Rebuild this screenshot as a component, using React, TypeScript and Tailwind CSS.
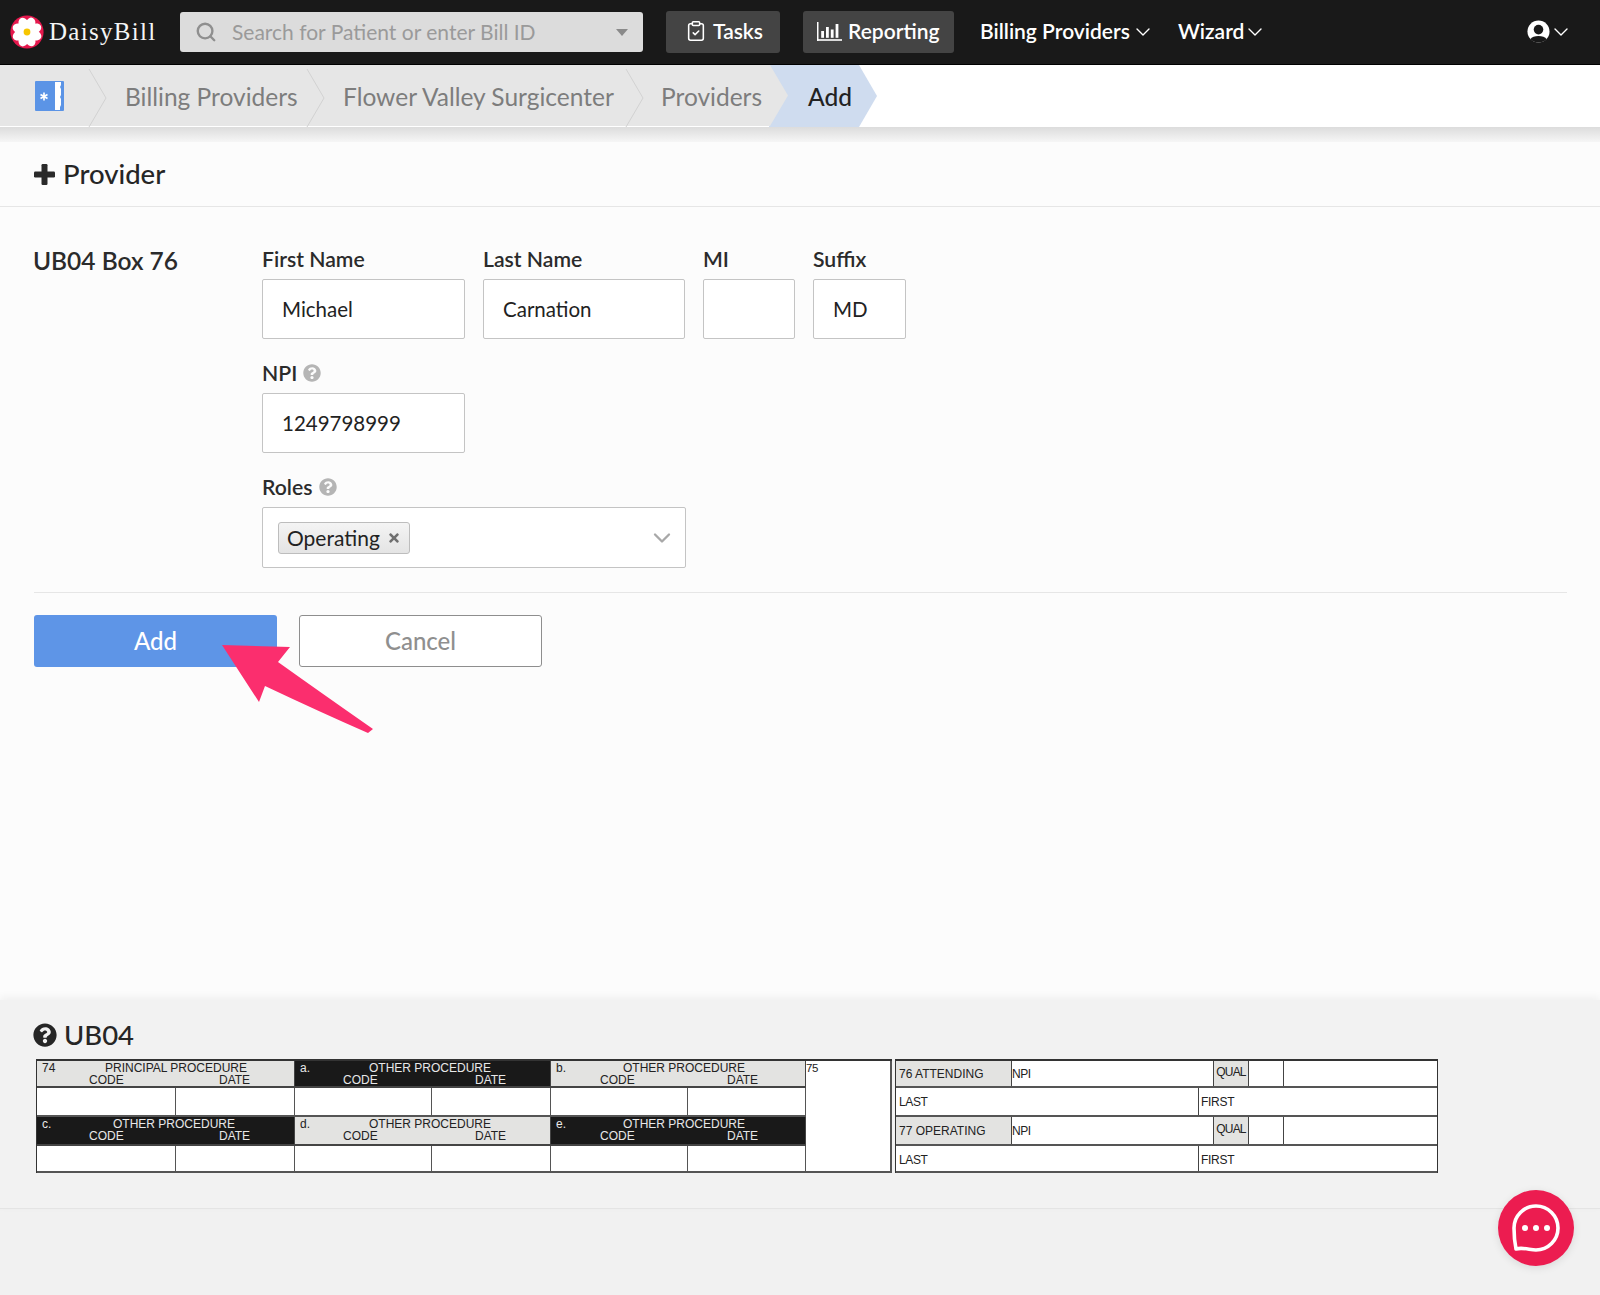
import React from "react";
import { ChevronDown, ClipboardCheck, Search } from "lucide-react";
import { FaQuestionCircle, FaTimes } from "react-icons/fa";

const Flower = () => (
  <svg viewBox="0 0 34 34" className="w-[34px] h-[34px] shrink-0">
    <circle cx="17" cy="17" r="16.6" fill="#e5184d" />
    {[0, 45, 90, 135, 180, 225, 270, 315].map((a) => (
      <ellipse key={a} cx="17" cy="8.6" rx="5" ry="6.8" fill="#fff" transform={`rotate(${a + 22} 17 17)`} />
    ))}
    <circle cx="17" cy="17" r="3.4" fill="#f7c600" />
  </svg>
);

const Chev = () => (
  <svg viewBox="0 0 20 60" className="w-[20px] h-[60px] shrink-0 self-start mt-[4px]">
    <path d="M1 0 L18 29 L1 58" fill="none" stroke="#d2d2d2" strokeWidth="1" />
  </svg>
);

const Label = ({ children, cls = "" }: { children: React.ReactNode; cls?: string }) => (
  <div className={`h-[24px] mb-[7px] flex items-center gap-[6px] text-[21.2px] leading-[24px] font-semibold text-[#2b2b2b] -translate-y-[1px] ${cls}`}>{children}</div>
);

const Field = ({ value, cls }: { value: string; cls: string }) => (
  <input
    readOnly
    value={value}
    className={`h-[60px] border border-[#c4c4c4] rounded-[2px] bg-white pl-[19px] text-[20.5px] text-[#222] outline-none ${cls}`}
  />
);

const Head = ({ dark, tag, title, t, c }: { dark?: boolean; tag: string; title: string; t: string; c: string }) => (
  <div className={`col-span-2 border-b-2 border-r border-[#444] leading-[12px] text-[12px] pt-[1px] ${dark ? "bg-[#191919] text-[#e8e8e8]" : "bg-[#e3e3e1] text-[#222]"}`}>
    <div className="flex">
      <span className={`pl-[5px] ${t}`}>{tag}</span>
      <span>{title}</span>
    </div>
    <div className="flex">
      <span className={c}>CODE</span>
      <span>DATE</span>
    </div>
  </div>
);

const Blank = () => <div className="bg-white border-r border-b-2 border-[#555]" />;

const NavChev = ({ cls }: { cls?: string }) => <ChevronDown size={24} strokeWidth={1.4} className={`shrink-0 ${cls ?? ""}`} />;

export default function App() {
  return (
    <div className="relative min-h-[1295px] bg-[#f1f1f1] font-['Lato','Liberation_Sans',sans-serif] overflow-hidden">
      {/* top nav */}
      <nav className="h-[65px] bg-[#191919] border-b border-black flex items-center pl-[10px] text-white">
        <Flower />
        <span className="ml-[5px] w-[108px] font-['Liberation_Serif',serif] text-[25px] tracking-[1.3px] text-[#f5f5f5] pb-[1px] whitespace-nowrap">DaisyBill</span>
        <div className="ml-[23px] w-[463px] h-[40px] rounded-[3px] bg-[#dcdcdc] flex items-center pl-[15px] pr-[15px] text-[#9a9a9a]">
          <Search size={22} strokeWidth={2.6} className="text-[#8f8f8f]" />
          <span className="ml-[15px] text-[21px] flex-1 pb-[1px]">Search for Patient or enter Bill ID</span>
          <span className="w-0 h-0 border-x-[6px] border-x-transparent border-t-[7px] border-t-[#8a8a8a]" />
        </div>
        <button className="ml-[23px] w-[114px] h-[42px] rounded-[3px] bg-[#444] flex items-center pl-[19px] gap-[6px] text-[21px] font-semibold">
          <ClipboardCheck size={22} strokeWidth={1.7} className="mb-[2px]" />
          <span className="pb-[2px]">Tasks</span>
        </button>
        <button className="ml-[23px] w-[151px] h-[42px] rounded-[3px] bg-[#444] flex items-center pl-[14px] gap-[6px] text-[21px] font-semibold">
          <svg viewBox="0 0 25 19" className="w-[25px] h-[19px] mb-[2px]" fill="#fff">
            <rect x="0" y="0" width="1.5" height="19" />
            <rect x="0" y="17.2" width="25" height="1.6" />
            <rect x="4.2" y="9" width="2.8" height="6.8" />
            <rect x="9" y="5" width="2.8" height="10.8" />
            <rect x="13.8" y="7.5" width="2.8" height="8.3" />
            <rect x="18.6" y="2" width="2.8" height="13.8" />
          </svg>
          <span className="pb-[2px]">Reporting</span>
        </button>
        <span className="ml-[26px] w-[151px] text-[21px] font-semibold pb-[2px] whitespace-nowrap">Billing Providers</span>
        <NavChev />
        <span className="ml-[23px] w-[65px] text-[21px] font-semibold pb-[2px]">Wizard</span>
        <NavChev />
        <svg viewBox="0 0 24 24" className="ml-auto w-[23px] h-[23px] mb-[2px]">
          <circle cx="12" cy="12" r="11.5" fill="#fff" />
          <circle cx="12" cy="10" r="5" fill="#191919" />
          <path d="M3.5 20 C6 15.5 18 15.5 20.5 20 C16 24.5 8 24.5 3.5 20Z" fill="#191919" />
        </svg>
        <NavChev cls="mr-[27px] -ml-[1px]" />
      </nav>

      {/* breadcrumb */}
      <div className="h-[62px] bg-white flex text-[24.5px] text-[#7d7d7d]">
        <div className="w-[88px] h-[61px] bg-[#e6e6e6] flex items-center pl-[35px]">
          <svg viewBox="0 0 29 30" className="w-[29px] h-[30px]">
            <rect width="29" height="30" rx="1" fill="#5b94e6" />
            <path d="M20 1h6v3l-1 2 1 2v6l-1 2 1 2v6l-1 2v3h-5z" fill="#fff" />
            <path d="M9 11.5v8M5.5 13.5l7 4M12.5 13.5l-7 4" stroke="#fff" strokeWidth="1.7" />
          </svg>
        </div>
        <div className="bg-[#e6e6e6] h-[61px] flex"><Chev /></div>
        <div className="bg-[#e6e6e6] h-[61px] w-[198px] flex items-center pl-[17px] pt-[3px]">Billing Providers</div>
        <div className="bg-[#e6e6e6] h-[61px] flex"><Chev /></div>
        <div className="bg-[#e6e6e6] h-[61px] w-[299px] flex items-center pl-[17px] pt-[3px]">Flower Valley Surgicenter</div>
        <div className="bg-[#e6e6e6] h-[61px] flex"><Chev /></div>
        <div className="bg-[#e6e6e6] h-[61px] w-[124px] flex items-center pl-[16px] pt-[3px]">Providers</div>
        <svg viewBox="0 0 19 62" preserveAspectRatio="none" className="w-[19px] h-[62px] shrink-0">
          <rect width="19" height="62" fill="#cfdcef" />
          <path d="M0 0 L1 0 L19 30.5 L1 61 L0 61Z" fill="#e6e6e6" />
        </svg>
        <div className="bg-[#cfdcef] h-[62px] w-[71px] flex items-center pl-[20px] pt-[2px] text-[#222] font-medium">Add</div>
        <svg viewBox="0 0 18 62" className="w-[18px] h-[62px] shrink-0">
          <path d="M0 0 L18 31 L0 62Z" fill="#cfdcef" />
        </svg>
      </div>
      <div className="h-[15px] bg-gradient-to-b from-[#dcdcdc] to-[#f6f6f6]" />

      {/* main panel */}
      <main className="bg-[#fcfcfc]">
        <header className="h-[65px] border-b border-[#e6e6e6] flex items-center pl-[34px] gap-[8px] text-[#262626]">
          <svg viewBox="0 0 21 21" className="w-[21px] h-[21px]" fill="#2a2a2a">
            <rect x="7.5" y="0" width="6" height="21" rx="1.2" />
            <rect x="0" y="7.5" width="21" height="6" rx="1.2" />
          </svg>
          <span className="text-[27.5px] font-medium">Provider</span>
        </header>
        <div className="h-[793px] px-[33px] pt-[41px]">
          <div className="flex">
            <div className="w-[229px] text-[24.5px] font-semibold text-[#2b2b2b] leading-[28px] -translate-y-[1px]">UB04 Box 76</div>
            <div>
              <div className="flex">
                <div className="w-[221px]"><Label>First Name</Label><Field value="Michael" cls="w-[203px]" /></div>
                <div className="w-[220px]"><Label>Last Name</Label><Field value="Carnation" cls="w-[202px]" /></div>
                <div className="w-[110px]"><Label>MI</Label><Field value="" cls="w-[92px]" /></div>
                <div><Label>Suffix</Label><Field value="MD" cls="w-[93px]" /></div>
              </div>
              <Label cls="mt-[23px]">NPI <FaQuestionCircle size={18} className="text-[#b5b5b5]" /></Label>
              <Field value="1249798999" cls="w-[203px] block" />
              <Label cls="mt-[23px]">Roles <FaQuestionCircle size={18} className="text-[#b5b5b5]" /></Label>
              <div className="w-[424px] h-[61px] border border-[#c4c4c4] rounded-[2px] bg-white flex items-center pl-[15px] pr-[9px]">
                <span className="h-[32px] w-[132px] border border-[#bdbdbd] rounded-[3px] bg-gradient-to-b from-[#f4f4f4] to-[#e4e4e4] flex items-center pl-[8px] gap-[7px] text-[21px] text-[#222]">
                  Operating <FaTimes size={14} className="text-[#6f6f6f]" />
                </span>
                <ChevronDown size={28} strokeWidth={2} className="ml-auto text-[#a8a8a8]" />
              </div>
            </div>
          </div>
          <div className="mt-[24px] ml-[1px] border-t border-[#e6e6e6]" />
          <div className="mt-[22px] ml-[1px] flex gap-[22px]">
            <button className="w-[243px] h-[52px] rounded-[3px] bg-[#5e95e7] text-white text-[24px] font-medium">Add</button>
            <button className="w-[243px] h-[52px] rounded-[3px] border border-[#8e8e8e] bg-white text-[#8f8f8f] text-[24px] font-medium">Cancel</button>
          </div>
        </div>
      </main>

      {/* UB04 */}
      <section className="h-[209px] bg-[#f2f2f2] border-b border-[#e4e4e4] shadow-[0_-3px_8px_rgba(0,0,0,0.05)] pt-[20px]">
        <div className="h-[30px] ml-[33px] flex items-center gap-[7px] text-[#262626]">
          <FaQuestionCircle size={24} />
          <span className="text-[27.5px] font-medium">UB04</span>
        </div>
        <div className="mt-[9px] ml-[36px] flex font-['Liberation_Sans',sans-serif]">
          <div className="grid grid-cols-[139px_119px_137px_119px_137px_118px_86px] grid-rows-[27px_29px_29px_27px] border-t-2 border-l border-[#333]">
            <Head tag="74" title="PRINCIPAL PROCEDURE" t="w-[68px]" c="ml-[52px] w-[130px]" />
            <Head dark tag="a." title="OTHER PROCEDURE" t="w-[74px]" c="ml-[48px] w-[132px]" />
            <Head tag="b." title="OTHER PROCEDURE" t="w-[72px]" c="ml-[49px] w-[127px]" />
            <div className="row-span-4 bg-white border-r-2 border-b-2 border-[#555] text-[11.5px] leading-[14px] tracking-[-0.5px] text-[#222]">75</div>
            <Blank /><Blank /><Blank /><Blank /><Blank /><Blank />
            <Head dark tag="c." title="OTHER PROCEDURE" t="w-[76px]" c="ml-[52px] w-[130px]" />
            <Head tag="d." title="OTHER PROCEDURE" t="w-[74px]" c="ml-[48px] w-[132px]" />
            <Head dark tag="e." title="OTHER PROCEDURE" t="w-[72px]" c="ml-[49px] w-[127px]" />
            <Blank /><Blank /><Blank /><Blank /><Blank /><Blank />
          </div>
          <div className="ml-[3px] w-[543px] border-t-2 border-l border-r border-[#333] text-[12px] text-[#222] bg-white">
            {["76 ATTENDING", "77 OPERATING"].map((r, i) => (
              <React.Fragment key={r}>
                <div className={`${i === 0 ? "h-[27px]" : "h-[29px] pb-0"} grid grid-cols-[116px_202px_35px_35px_1fr] border-b-2 border-[#555]`}>
                  <div className="bg-[#e3e3e1] border-r border-[#444] flex items-center pl-[3px]">{r}</div>
                  <div className="border-r border-[#444] flex items-center tracking-[-0.5px]">NPI</div>
                  <div className="bg-[#e3e3e1] border-r border-[#444] flex items-center justify-center tracking-[-0.8px] pb-[3px]">QUAL</div>
                  <div className="border-r border-[#444]" />
                  <div />
                </div>
                <div className={`${i === 0 ? "h-[29px]" : "h-[27px]"} grid grid-cols-[303px_1fr] border-b-2 border-[#555]`}>
                  <div className={`border-r border-[#444] flex items-center pl-[3px] tracking-[-0.4px] ${i === 1 ? "pt-[2px]" : ""}`}>LAST</div>
                  <div className={`flex items-center pl-[2px] tracking-[-0.3px] ${i === 1 ? "pt-[2px]" : ""}`}>FIRST</div>
                </div>
              </React.Fragment>
            ))}
          </div>
        </div>
      </section>

      {/* annotation arrow */}
      <svg viewBox="0 0 158 95" className="absolute left-[220px] top-[642px] w-[158px] h-[95px]">
        <path d="M2 3 L70 5 L58 20 Q100 50 153 87 L148 91 Q100 70 45 44 L39 60Z" fill="#fb2e6e" />
      </svg>

      {/* chat bubble */}
      <button className="absolute left-[1498px] top-[1190px] w-[76px] h-[76px] rounded-full bg-[#ec1c50] flex items-center justify-center shadow-[0_2px_8px_rgba(0,0,0,0.1)]">
        <svg viewBox="0 0 48 48" className="w-[48px] h-[48px] -mt-[1px]" fill="none">
          <path d="M4 45 C3 40 2 30 2 24 A22 22 0 1 1 24 46 C18 46 11 43 4 45Z" stroke="#fff" strokeWidth="3.6" strokeLinejoin="round" />
          <circle cx="13" cy="24" r="3" fill="#fff" />
          <circle cx="24" cy="24" r="3" fill="#fff" />
          <circle cx="35" cy="24" r="3" fill="#fff" />
        </svg>
      </button>
    </div>
  );
}
